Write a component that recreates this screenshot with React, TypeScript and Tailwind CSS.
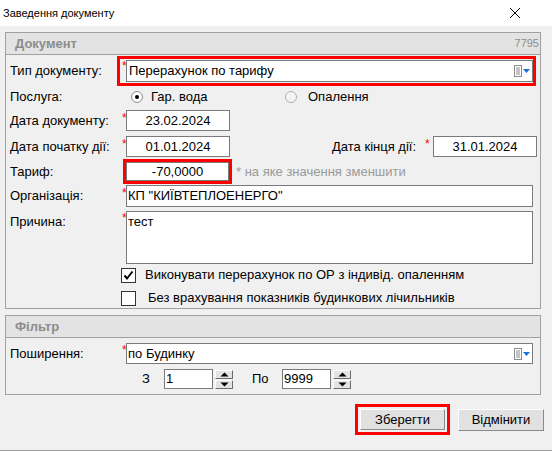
import React from 'react';

const ListIcon: React.FC = () => (
  <svg width="17" height="12" viewBox="0 0 17 12" className="shrink-0">
    <rect x="0.5" y="0.5" width="7" height="11" fill="#fff" stroke="#8a8a8a" />
    <line x1="2" y1="3" x2="6" y2="3" stroke="#8a8a8a" />
    <line x1="2" y1="5" x2="6" y2="5" stroke="#8a8a8a" />
    <line x1="2" y1="7" x2="6" y2="7" stroke="#8a8a8a" />
    <line x1="2" y1="9" x2="6" y2="9" stroke="#8a8a8a" />
    <polygon points="9,4 16,4 12.5,8" fill="#1e6fd9" />
  </svg>
);

const Spin: React.FC = () => (
  <div className="flex flex-col w-[18px] h-[19px] ml-[2px] gap-[1px]">
    {[0, 1].map((i) => (
      <div
        key={i}
        className="flex-1 flex items-center justify-center bg-[#e3e3e3] border-t border-l border-t-white border-l-white border-b border-r border-b-[#6d6d6d] border-r-[#6d6d6d]"
      >
        <svg width="9" height="5" viewBox="0 0 9 5">
          {i === 0 ? <polygon points="0.5,4.5 8.5,4.5 4.5,0.5" fill="#000" /> : <polygon points="0.5,0.5 8.5,0.5 4.5,4.5" fill="#000" />}
        </svg>
      </div>
    ))}
  </div>
);

const Input: React.FC<{ children?: React.ReactNode; className?: string }> = ({ children, className = '' }) => (
  <div className={`bg-white border border-[#7a7a7a] flex items-center text-black ${className}`}>{children}</div>
);

const GroupHeader: React.FC<{ title: string; right?: string }> = ({ title, right }) => (
  <div className="h-[22px] bg-[#e3e3e3] border-b border-[#a0a0a0] flex items-center justify-between pl-[9px] pr-[1px]">
    <span className="text-[13px] font-bold text-[#8c8c8c]">{title}</span>
    {right && <span className="text-[11px] text-[#8c8c8c]">{right}</span>}
  </div>
);

export default function App() {
  return (
    <div
      className="w-[552px] h-[451px] bg-[#f0f0f0] flex flex-col text-[13px] text-black overflow-hidden"
      style={{ fontFamily: '"Liberation Sans", Arial, sans-serif' }}
    >
      {/* Title bar */}
      <div className="h-[26px] bg-white flex items-center justify-between pl-[3px] pr-[31px] shrink-0">
        <span className="text-[11px]">Заведення документу</span>
        <svg width="12" height="12" viewBox="0 0 12 12">
          <path d="M1 1 L11 11 M11 1 L1 11" stroke="#000" strokeWidth="1" />
        </svg>
      </div>

      <div className="pl-[5px] pt-[6px]">
        {/* Документ */}
        <div className="w-[536px] border border-[#a0a0a0]">
          <GroupHeader title="Документ" right="7795" />
          <div className="pl-[4px] pt-[1px] pb-[2px]">
            <div className="flex items-center h-[30px]">
              <span className="w-[107px]">Тип документу:</span>
              <div className="w-[419px] h-[30px] border-[3px] border-[#ff0000] flex items-center">
                <span className="w-[6px] pl-[2px] text-[#ff0000] text-[12px] self-start leading-none pt-[1px]">*</span>
                <Input className="flex-1 h-[22px] pl-[2px] pr-[1px] justify-between">
                  <span>Перерахунок по тарифу</span>
                  <ListIcon />
                </Input>
              </div>
            </div>

            <div className="flex items-center h-[21px]">
              <span className="w-[121px]">Послуга:</span>
              <div className="w-[154px] flex items-center">
                <span className="w-[12px] h-[12px] rounded-full border border-[#8c8c8c] bg-white flex items-center justify-center">
                  <span className="w-[4px] h-[4px] rounded-full bg-black" />
                </span>
                <span className="ml-[8px]">Гар. вода</span>
              </div>
              <span className="w-[12px] h-[12px] rounded-full border border-[#b0b0b0] bg-[#f4f4f4]" />
              <span className="ml-[11px]">Опалення</span>
            </div>

            <div className="flex items-center h-[21px] mt-[3px]">
              <span className="w-[110px]">Дата документу:</span>
              <span className="w-[6px] text-[#ff0000] text-[12px] self-start leading-none pt-[2px] pl-[2px]">*</span>
              <Input className="w-[104px] h-[21px] justify-center">23.02.2024</Input>
            </div>

            <div className="flex items-center h-[21px] mt-[5px] mr-[3px]">
              <span className="w-[110px]">Дата початку дії:</span>
              <span className="w-[6px] text-[#ff0000] text-[12px] self-start leading-none pt-[2px] pl-[2px]">*</span>
              <Input className="w-[104px] h-[21px] justify-center">01.01.2024</Input>
              <span className="flex-1 text-right pr-[9px]">Дата кінця дії:</span>
              <span className="w-[8px] text-[#ff0000] text-[12px] self-start leading-none pt-[2px]">*</span>
              <Input className="w-[104px] h-[21px] justify-center">31.01.2024</Input>
            </div>

            <div className="flex items-center h-[25px] mt-[2px]">
              <span className="w-[113px]">Тариф:</span>
              <div className="w-[109px] h-[25px] border-[3px] border-[#ff0000]">
                <Input className="h-full justify-center">-70,0000</Input>
              </div>
              <span className="ml-[4px] text-[#9a9a9a]">* на яке значення зменшити</span>
            </div>

            <div className="flex items-center h-[22px] mt-[1px]">
              <span className="w-[110px]">Організація:</span>
              <span className="w-[6px] text-[#ff0000] text-[12px] self-start leading-none pt-[2px] pl-[2px]">*</span>
              <Input className="w-[407px] h-[22px] pl-[1px]">КП "КИЇВТЕПЛОЕНЕРГО"</Input>
            </div>

            <div className="flex items-start h-[53px] mt-[4px]">
              <span className="w-[110px] pt-[1px]">Причина:</span>
              <span className="w-[6px] text-[#ff0000] text-[12px] leading-none pt-[1px] pl-[2px]">*</span>
              <div className="w-[407px] h-[53px] bg-white border border-[#7a7a7a] pl-[1px]">тест</div>
            </div>

            <div className="flex items-center h-[16px] mt-[3px] pl-[111px]">
              <span className="w-[15px] h-[15px] border border-[#333] bg-white flex items-center justify-center">
                <svg width="11" height="11" viewBox="0 0 11 11">
                  <path d="M1.5 5.5 L4 8.5 L9.5 1.5" stroke="#000" strokeWidth="2" fill="none" />
                </svg>
              </span>
              <span className="ml-[9px]">Виконувати перерахунок по ОР з індивід. опаленням</span>
            </div>

            <div className="flex items-center h-[16px] mt-[7px] pl-[111px]">
              <span className="w-[15px] h-[15px] border border-[#333] bg-white" />
              <span className="ml-[12px]">Без врахування показників будинкових лічильників</span>
            </div>
          </div>
        </div>

        {/* Фільтр */}
        <div className="w-[536px] border border-[#a0a0a0] mt-[6px]">
          <GroupHeader title="Фільтр" />
          <div className="pl-[4px] pt-[5px] pb-[5px]">
            <div className="flex items-center h-[21px]">
              <span className="w-[110px]">Поширення:</span>
              <span className="w-[6px] text-[#ff0000] text-[12px] self-start leading-none pt-[1px] pl-[2px]">*</span>
              <Input className="w-[407px] h-[21px] pl-[1px] pr-[1px] justify-between">
                <span>по Будинку</span>
                <ListIcon />
              </Input>
            </div>
            <div className="flex items-center h-[20px] mt-[5px]">
              <span className="ml-[132px] w-[22px]">З</span>
              <Input className="w-[49px] h-[20px] pl-[1px]">1</Input>
              <Spin />
              <span className="ml-[19px] w-[30px]">По</span>
              <Input className="w-[49px] h-[20px] pl-[1px]">9999</Input>
              <Spin />
            </div>
          </div>
        </div>
      </div>

      {/* Buttons */}
      <div className="flex items-center justify-end pr-[8px] mt-[9px]">
        <div className="w-[95px] h-[31px] border-[3px] border-[#ff0000] p-[2px] flex">
          <div className="flex-1 bg-[#e1e1e1] border border-t-white border-l-white border-b-[#8a8a8a] border-r-[#8a8a8a] flex items-center justify-center">
            Зберегти
          </div>
        </div>
        <div className="ml-[8px] w-[86px] h-[22px] bg-[#e1e1e1] border border-t-white border-l-white border-b-[#8a8a8a] border-r-[#8a8a8a] flex items-center justify-center">
          Відмінити
        </div>
      </div>
      <div className="mt-[15px] border-b border-[#a0a0a0]" />
    </div>
  );
}
